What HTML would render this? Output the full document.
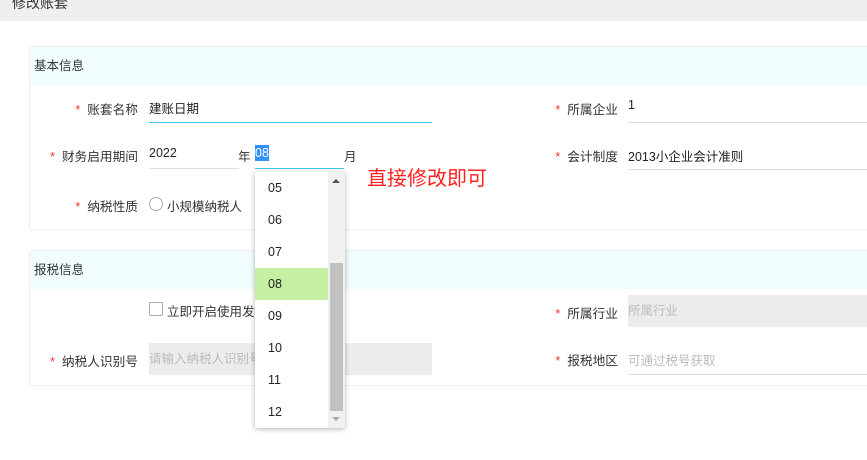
<!DOCTYPE html>
<html><head><meta charset="utf-8"><style>
*{margin:0;padding:0;box-sizing:border-box}
body{width:867px;height:460px;background:#fff;font-family:"Liberation Sans","Noto Sans CJK SC",sans-serif;font-size:12.5px;color:#222;position:relative;overflow:hidden}
.a{position:absolute;white-space:nowrap}
.lbl{position:absolute;text-align:right;color:#333;font-size:12.7px;letter-spacing:0}
.lbl i{color:#e33;font-style:normal;margin-right:7px}
.ul{position:absolute;height:1px;background:#ddd}
.cy{background:#3ec6e0}
.gray{position:absolute;background:#ececec;color:#bbb;padding-left:0;line-height:32px}
.panel{position:absolute;left:29px;width:850px;border:1px solid #eee;border-radius:3px}
.ph{background:#f1fcfe;height:38px;line-height:38px;padding-left:4px;color:#333}
.dd{position:absolute;left:255px;top:172px;width:90px;height:256px;background:#fff;box-shadow:0 1px 5px rgba(0,0,0,.3);overflow:hidden}
.it{position:absolute;left:0;width:73px;height:32px;line-height:32px;padding-left:13px;color:#222}
</style></head><body>
<div class="a" style="left:0;top:0;width:867px;height:21px;background:#efefef"></div>
<div class="a" style="left:12px;top:-7px;font-size:14px;color:#333">修改账套</div>

<div class="panel" style="top:46px;height:184px"><div class="ph">基本信息</div></div>
<div class="panel" style="top:250px;height:136px"><div class="ph">报税信息</div></div>

<div class="lbl" style="right:729px;top:99px"><i>*</i>账套名称</div>
<div class="a" style="left:149px;top:98px">建账日期</div>
<div class="ul cy" style="left:149px;top:122px;width:283px"></div>

<div class="lbl" style="right:729px;top:146px"><i>*</i>财务启用期间</div>
<div class="a" style="left:149px;top:146px">2022</div>
<div class="ul" style="left:149px;top:168px;width:90px"></div>
<div class="a" style="left:238px;top:146px;color:#333">年</div>
<div class="a" style="left:255px;top:145px;background:#3390ff;color:#fff;height:16px;line-height:16px">08</div>
<div class="ul cy" style="left:255px;top:168px;width:89px"></div>
<div class="a" style="left:344px;top:146px;color:#333">月</div>

<div class="lbl" style="right:729px;top:196px"><i>*</i>纳税性质</div>
<div class="a" style="left:149px;top:197px;width:14px;height:14px;border:1px solid #aaa;border-radius:50%"></div>
<div class="a" style="left:167px;top:196px;color:#333">小规模纳税人</div>

<div class="a" style="left:367px;top:162px;font-size:20px;color:#f22">直接修改即可</div>

<div class="lbl" style="right:249px;top:99px"><i>*</i>所属企业</div>
<div class="a" style="left:628px;top:98px">1</div>
<div class="ul" style="left:628px;top:122px;width:239px"></div>
<div class="lbl" style="right:249px;top:146px"><i>*</i>会计制度</div>
<div class="a" style="left:628px;top:146px">2013小企业会计准则</div>
<div class="ul" style="left:628px;top:169px;width:239px"></div>

<div class="a" style="left:149px;top:302px;width:14px;height:14px;border:1px solid #aaa;border-radius:2px"></div>
<div class="a" style="left:167px;top:301px;color:#333">立即开启使用发票管理功能服务</div>

<div class="lbl" style="right:729px;top:351px"><i>*</i>纳税人识别号</div>
<div class="gray" style="left:149px;top:343px;width:283px;height:32px">请输入纳税人识别号</div>

<div class="lbl" style="right:249px;top:303px"><i>*</i>所属行业</div>
<div class="gray" style="left:628px;top:295px;width:239px;height:32px">所属行业</div>
<div class="lbl" style="right:249px;top:350px"><i>*</i>报税地区</div>
<div class="a" style="left:628px;top:350px;color:#bbb">可通过税号获取</div>
<div class="ul" style="left:628px;top:374px;width:239px"></div>

<div class="dd">
<div class="it" style="top:0">05</div>
<div class="it" style="top:32px">06</div>
<div class="it" style="top:64px">07</div>
<div class="it" style="top:96px;background:#c5f0a4">08</div>
<div class="it" style="top:128px">09</div>
<div class="it" style="top:160px">10</div>
<div class="it" style="top:192px">11</div>
<div class="it" style="top:224px">12</div>
<div class="a" style="left:73px;top:0;width:17px;height:256px;background:#f1f1f1"></div>
<div class="a" style="left:75px;top:91px;width:13px;height:148px;background:#c1c1c1"></div>
<div class="a" style="left:77px;top:7px;width:0;height:0;border-left:4px solid transparent;border-right:4px solid transparent;border-bottom:4px solid #555"></div>
<div class="a" style="left:77px;top:245px;width:0;height:0;border-left:4px solid transparent;border-right:4px solid transparent;border-top:4px solid #aaa"></div>
</div>
</body></html>
